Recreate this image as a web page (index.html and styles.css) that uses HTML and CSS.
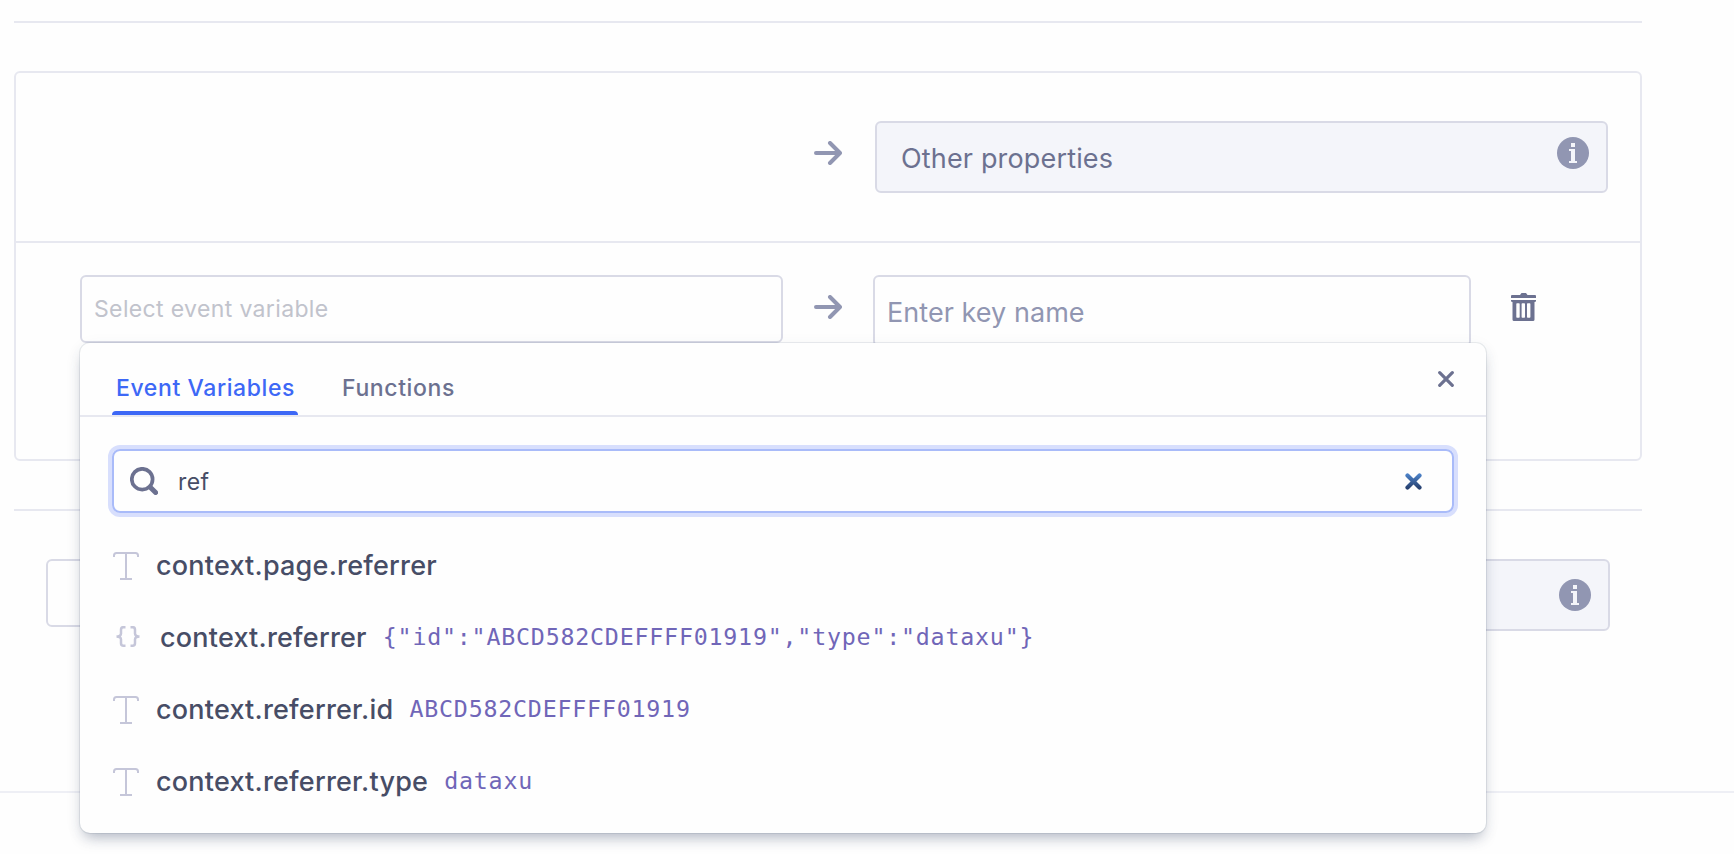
FILE: index.html
```html
<!DOCTYPE html>
<html lang="en">
<head>
<meta charset="utf-8">
<title>Event mapping</title>
<link rel="stylesheet" href="styles.css">
</head>
<body>
<svg class="defs" width="0" height="0" aria-hidden="true">
  <defs>
    <symbol id="arrow" viewBox="0 0 28 24"><path d="M2 12H25.500M16 2L26 12L16 22" fill="none" stroke="currentColor" stroke-width="4" stroke-linecap="round" stroke-linejoin="round"/></symbol>
    <symbol id="info" viewBox="0 0 32 32"><circle cx="16" cy="16" r="16" fill="#9196b2"/><path d="M14 6h4v4h-4zM12 12h6v12h2v2h-8v-2h2v-10h-2z" fill="#f4f5fa"/></symbol>
    <symbol id="type" viewBox="0 0 26 28"><path d="M1 5V3.500Q1 1 3.500 1H22.500Q25 1 25 3.500V5M13 1V27M7 27H19" fill="none" stroke="currentColor" stroke-width="2"/></symbol>
    <symbol id="braces" viewBox="0 0 26 22"><path d="M10.500 1.200H8.500Q6 1.200 6 3.700V7.500Q6 10.500 1.500 10.500Q6 10.500 6 13.500V17.300Q6 19.800 8.500 19.800H10.500M15.500 1.200H17.500Q20 1.200 20 3.700V7.500Q20 10.500 24.500 10.500Q20 10.500 20 13.500V17.300Q20 19.800 17.500 19.800H15.500" fill="none" stroke="currentColor" stroke-width="2.500"/></symbol>
    <linearGradient id="clear-fill" gradientUnits="userSpaceOnUse" x1="0" y1="0" x2="0" y2="17"><stop offset=".1" stop-color="#4b80c6"/><stop offset=".9" stop-color="#27406f"/></linearGradient>
  </defs>
</svg>
<main class="page">
  <section class="card">
    <div class="row row-fixed">
      <svg class="arrow"><use href="#arrow"/></svg>
      <div class="property"><span class="property-name">Other properties</span><svg class="info"><use href="#info"/></svg></div>
    </div>
    <div class="row row-edit">
      <div class="select">Select event variable</div>
      <svg class="arrow"><use href="#arrow"/></svg>
      <div class="key">Enter key name</div>
      <svg class="trash" viewBox="0 0 26 28"><path fill="#6c7190" fill-rule="evenodd" d="M1 2H9L10.500 0H15L16.500 2H24Q25 2 25 3V5H0V3Q0 2 1 2ZM0 7H25V8Q25 9 23.500 9V26.500Q23.500 28 22 28H3Q1.500 28 1.500 26.500V9Q0 9 0 8ZM6 10.300Q5.300 10.300 5.300 11V24Q5.300 24.700 6 24.700H8Q8.700 24.700 8.700 24V11Q8.700 10.300 8 10.300ZM11.300 10.300Q10.600 10.300 10.600 11V24Q10.600 24.700 11.300 24.700H13.300Q14 24.700 14 24V11Q14 10.300 13.300 10.300ZM16.700 10.300Q16 10.300 16 11V24Q16 24.700 16.700 24.700H18.700Q19.400 24.700 19.400 24V11Q19.400 10.300 18.700 10.300Z"/></svg>
    </div>
  </section>
  <section class="extra">
    <div class="extra-select"></div>
    <div class="extra-property"><svg class="info"><use href="#info"/></svg></div>
  </section>
  <hr class="page-rule">
</main>
<div class="popup">
  <div class="tabs">
    <div class="tab tab-active">Event Variables</div>
    <div class="tab">Functions</div>
    <svg class="close" viewBox="0 0 16 16"><path d="M1.700 1.700L14.300 14.300M14.300 1.700L1.700 14.300" stroke="#6c7190" stroke-width="3.200" stroke-linecap="round"/></svg>
  </div>
  <div class="search">
    <svg class="glass" viewBox="0 0 28 28"><circle cx="12.200" cy="12.200" r="10.400" fill="none" stroke="#6c7190" stroke-width="3.700"/><path d="M20.500 20.500L25.600 25.600" stroke="#6c7190" stroke-width="5" stroke-linecap="round"/></svg>
    <span class="query">ref</span>
    <svg class="clear" viewBox="0 0 17 17"><path d="M2.500 2.500L14.500 14.500M14.500 2.500L2.500 14.500" stroke="url(#clear-fill)" stroke-width="4.200" stroke-linecap="round"/></svg>
  </div>
  <div class="results">
    <div class="result"><svg class="type"><use href="#type"/></svg><span class="name">context.page.referrer</span></div>
    <div class="result"><svg class="braces"><use href="#braces"/></svg><span class="name">context.referrer</span><span class="value">{"id":"ABCD582CDEFFFF01919","type":"dataxu"}</span></div>
    <div class="result"><svg class="type"><use href="#type"/></svg><span class="name">context.referrer.id</span><span class="value">ABCD582CDEFFFF01919</span></div>
    <div class="result"><svg class="type"><use href="#type"/></svg><span class="name">context.referrer.type</span><span class="value">dataxu</span></div>
  </div>
</div>
</body>
</html>
```

FILE: styles.css
```css
* { box-sizing: border-box; }
body { margin: 0; width: 1734px; height: 854px; overflow: hidden; position: relative; background: #fefefe; font-family: Inter, "Liberation Sans", sans-serif; }
svg { display: block; flex: none; }
.defs { position: absolute; }
.page { padding-top: 21px; }
.card { margin-left: 14px; width: 1628px; height: 390px; border: 2px solid #e7e8f0; border-radius: 6px; margin-top: 48px; }
.page::before { content: ""; display: block; margin-left: 14px; width: 1628px; height: 2px; background: #e7e8f0; }
.row { display: flex; }
.row-fixed { height: 170px; padding: 48px 32px 0 798px; border-bottom: 2px solid #e7e8f0; }
.arrow { width: 28px; height: 24px; margin-top: 20px; color: #9196b2; }
.property { width: 733px; height: 72px; margin-left: 33px; padding: 0 17px 0 24px; display: flex; justify-content: space-between; border: 2px solid #d9dae6; border-radius: 6px; background: #f4f5fa; }
.property-name { font-size: 27px; line-height: 72px; height: 68px; color: #6c7190; letter-spacing: .16px; }
.info { width: 32px; height: 32px; margin-top: 14px; }
.row-edit { padding: 32px 0 0 64px; }
.row-edit .arrow { margin: 20px 0 0 31px; }
.select { width: 703px; height: 68px; border: 2px solid #d9dae6; border-radius: 6px; padding-left: 12px; font-size: 23px; line-height: 65px; letter-spacing: .36px; color: #c1c3cc; }
.key { width: 598px; height: 72px; margin-left: 31px; border: 2px solid #d9dae6; border-radius: 6px; padding-left: 12px; font-size: 27px; line-height: 72px; letter-spacing: .05px; color: #9196b2; }
.trash { width: 26px; height: 28px; margin: 18px 0 0 40px; }
.extra { margin: 48px 0 0 14px; width: 1628px; height: 282px; border-top: 2px solid #e7e8f0; padding: 48px 32px 0; display: flex; justify-content: space-between; }
.extra-select { width: 703px; height: 68px; border: 2px solid #d9dae6; border-radius: 6px; }
.extra-property { width: 733px; height: 72px; border: 2px solid #d9dae6; border-radius: 6px; background: #f4f5fa; display: flex; justify-content: flex-end; padding: 4px 17px 0 0; }
.page-rule { margin: 0; border: 0; height: 2px; background: #eeeff5; }

.popup { position: absolute; left: 80px; top: 343px; width: 1406px; height: 490px; background: #fefefe; border-radius: 10px; box-shadow: 0 0 0 1px rgba(67, 90, 111, .1), 0 8px 14px -4px rgba(67, 80, 111, .38), 0 4px 20px -4px rgba(67, 90, 111, .1); }
.tabs { height: 74px; display: flex; align-items: flex-end; padding: 0 32px; border-bottom: 2px solid #e7e8f0; }
.tab { position: relative; height: 44px; line-height: 35px; font-size: 23px; font-weight: 500; letter-spacing: .6px; color: #6c7190; white-space: nowrap; }
.tab-active { width: 186px; padding-left: 4px; margin-right: 44px; color: #3d68f6; }
.tab-active::after { content: ""; position: absolute; left: 0; right: 0; bottom: 0; height: 4px; background: #3d68f6; border-radius: 4px 4px 0 0; }
.close { width: 16px; height: 16px; margin: 0 0 28px auto; }
.search { height: 64px; margin: 32px 32px 16px; border: 2px solid #a9bbf9; border-radius: 8px; box-shadow: 0 0 0 4px #d8dffd; display: flex; align-items: center; padding: 0 30px 0 16px; }
.glass { width: 28px; height: 28px; }
.query { margin-left: 20px; padding-top: 2px; font-size: 23px; line-height: 30px; letter-spacing: .4px; color: #474d66; }
.clear { width: 17px; height: 17px; margin-left: auto; }
.result { height: 72px; padding-left: 33px; display: flex; align-items: center; }
.type { width: 26px; height: 28px; color: #c5c6d9; margin: 2px 17px 0 0; }
.braces { width: 26px; height: 22px; color: #c5c6d9; margin: 0 19px 0 2px; }
.name { padding-top: 2px; font-size: 27px; line-height: 40px; font-weight: 500; letter-spacing: .21px; color: #474d66; white-space: nowrap; }
.value { margin-left: 16px; font-family: "DejaVu Sans Mono", monospace; font-size: 23.3px; line-height: 40px; letter-spacing: .78px; color: #7066b8; white-space: pre; }
```
